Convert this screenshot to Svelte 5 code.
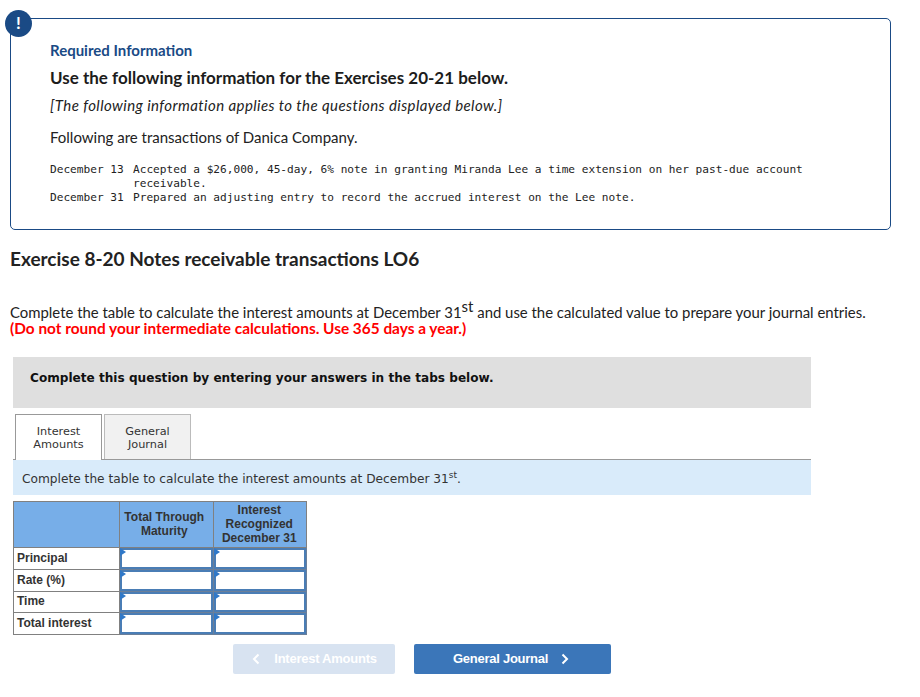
<script>
	const rows = ['Principal', 'Rate (%)', 'Time', 'Total interest'];
</script>

<div class="page">
	<section class="card">
		<span class="badge">!</span>
		<h4>Required Information</h4>
		<h3>Use the following information for the Exercises 20-21 below.</h3>
		<p class="note">[The following information applies to the questions displayed below.]</p>
		<p class="lead">Following are transactions of Danica Company.</p>
		<div class="entries">
			<span>December 13</span>
			<span>Accepted a $26,000, 45-day, 6% note in granting Miranda Lee a time extension on her past-due account receivable.</span>
			<span>December 31</span>
			<span>Prepared an adjusting entry to record the accrued interest on the Lee note.</span>
		</div>
	</section>

	<h2>Exercise 8-20 Notes receivable transactions LO6</h2>

	<p class="intro">
		Complete the table to calculate the interest amounts at December 31<sup>st</sup> and use the calculated value to prepare your journal entries.
		<strong>(Do not round your intermediate calculations. Use 365 days a year.)</strong>
	</p>

	<div class="prompt">Complete this question by entering your answers in the tabs below.</div>

	<div class="tabs">
		<div class="tab active">Interest<br />Amounts</div>
		<div class="tab">General<br />Journal</div>
	</div>

	<div class="band">Complete the table to calculate the interest amounts at December 31<sup>st</sup>.</div>

	<table>
		<thead>
			<tr>
				<th class="label"></th>
				<th class="num first">Total Through<br />Maturity</th>
				<th class="num second">Interest<br />Recognized<br />December 31</th>
			</tr>
		</thead>
		<tbody>
			{#each rows as row}
				<tr>
					<td class="label">{row}</td>
					<td class="input"></td>
					<td class="input"></td>
				</tr>
			{/each}
		</tbody>
	</table>

	<div class="nav">
		<button class="prev">
			<svg width="8" height="12" viewBox="0 0 8 12"><path d="M6.5 1.5 2 6l4.5 4.5" /></svg>
			Interest Amounts
		</button>
		<button class="next">
			General Journal
			<svg width="8" height="12" viewBox="0 0 8 12"><path d="M1.5 1.5 6 6l-4.5 4.5" /></svg>
		</button>
	</div>
</div>

<style>
	:global(body) {
		background: #fff;
	}

	.page {
		width: 920px;
		height: 697px;
		overflow: hidden;
		padding: 18px 0 0 10px;
		box-sizing: border-box;
		font-family: Lato, sans-serif;
		color: #222;
		position: relative;
	}

	.card {
		position: relative;
		width: 881px;
		height: 212px;
		box-sizing: border-box;
		border: 1px solid #1a4a85;
		border-radius: 5px;
		padding: 22px 39px 0;
	}

	.badge {
		position: absolute;
		left: -6px;
		top: -9px;
		width: 27px;
		height: 27px;
		border-radius: 50%;
		background: #1a4a85;
		color: #fff;
		font-weight: 700;
		font-size: 17px;
		line-height: 26px;
		text-align: center;
	}

	h4 {
		margin: 0;
		font-size: 15px;
		line-height: 18px;
		font-weight: 700;
		color: #1a4a85;
	}

	h3 {
		margin: 9px 0 0;
		font-size: 17px;
		line-height: 20px;
		font-weight: 700;
		color: #1c1c1c;
	}

	.note {
		margin: 8px 0 0;
		font-size: 15px;
		letter-spacing: 0.42px;
		line-height: 18px;
		font-style: italic;
	}

	.lead {
		margin: 14px 0 0;
		font-size: 15px;
		line-height: 18px;
	}

	.entries {
		margin-top: 17px;
		display: grid;
		grid-template-columns: 83px 680px;
		font-family: 'DejaVu Sans Mono', monospace;
		font-size: 11.13px;
		line-height: 14px;
	}

	h2 {
		margin: 18px 0 0;
		font-size: 19px;
		line-height: 22px;
		font-weight: 700;
		color: #222;
	}

	.intro {
		margin: 34px 0 0;
		width: 880px;
		font-size: 14.9px;
		line-height: 16px;
	}

	.intro sup {
		font-size: 15px;
		line-height: 0;
	}

	.intro strong {
		display: block;
		font-size: 15.4px;
		color: #f00;
	}

	.prompt {
		margin: 21px 0 0 3px;
		width: 798px;
		height: 51px;
		padding-left: 17px;
		box-sizing: border-box;
		background: #dfdfdf;
		font-family: 'DejaVu Sans', sans-serif;
		font-weight: 700;
		font-size: 12.1px;
		line-height: 43px;
		color: #111;
	}

	.tabs {
		display: flex;
		gap: 2px;
		margin: 6px 0 0 5px;
		height: 45px;
		position: relative;
		z-index: 1;
	}

	.tab {
		width: 87px;
		height: 45px;
		box-sizing: border-box;
		border: 1px solid #bbb;
		border-bottom: 0;
		background: #f1f1f1;
		font-family: 'DejaVu Sans', sans-serif;
		font-size: 11.3px;
		line-height: 13px;
		text-align: center;
		padding-top: 10px;
		color: #333;
	}

	.tab.active {
		background: #fff;
		border-color: #999;
		height: 46px;
	}

	.band {
		margin-left: 3px;
		width: 798px;
		height: 36px;
		padding-left: 9px;
		box-sizing: border-box;
		background: #d9ebfa;
		border-top: 1px solid #999;
		font-family: 'DejaVu Sans', sans-serif;
		font-size: 12.2px;
		line-height: 39px;
		color: #333;
	}

	.band sup {
		font-size: 9px;
		line-height: 0;
	}

	table {
		margin: 6px 0 0 3px;
		border-collapse: collapse;
		table-layout: fixed;
		width: 294px;
		font-family: 'Liberation Sans', sans-serif;
		font-size: 12px;
		color: #333;
	}

	th {
		height: 46px;
		padding: 0 0 2px;
		box-sizing: border-box;
		background: #77aee8;
		border: 1px solid #808080;
		line-height: 14px;
	}

	th.label,
	td.label {
		width: 106px;
	}

	th.first {
		padding-right: 4px;
	}

	th.second {
		padding-right: 1px;
	}

	td {
		height: 21px;
		padding: 0;
		border: 1px solid #808080;
	}

	tr:nth-child(3) td {
		height: 20px;
	}

	td.label {
		padding: 0 0 2px 3px;
		box-sizing: border-box;
		font-weight: 700;
		color: #333;
	}

	td.input {
		position: relative;
		background: #fff;
		box-shadow: inset 0 0 0 2px #4a7db5;
		border: 1px solid #6b7f99;
	}

	td.input::before {
		content: '';
		position: absolute;
		left: 0;
		top: 0;
		border-left: 6px solid #2f78c8;
		border-top: 4px solid transparent;
		border-bottom: 4px solid transparent;
	}

	.nav {
		display: flex;
		gap: 19px;
		margin: 9px 0 0 223px;
	}

	button {
		height: 30px;
		border: 0;
		border-radius: 2px;
		font-family: 'Liberation Sans', sans-serif;
		font-size: 13px;
		font-weight: 700;
		letter-spacing: -0.25px;
		color: #fff;
		display: flex;
		align-items: center;
		justify-content: center;
		gap: 13px;
		padding: 0 0 1px;
	}

	button path {
		fill: none;
		stroke: #fff;
		stroke-width: 2;
	}

	.prev {
		width: 162px;
		background: #d8e3f1;
		gap: 14px;
		padding-left: 1px;
	}

	.next {
		width: 197px;
		background: #3b76b9;
		padding-right: 3px;
	}
</style>
